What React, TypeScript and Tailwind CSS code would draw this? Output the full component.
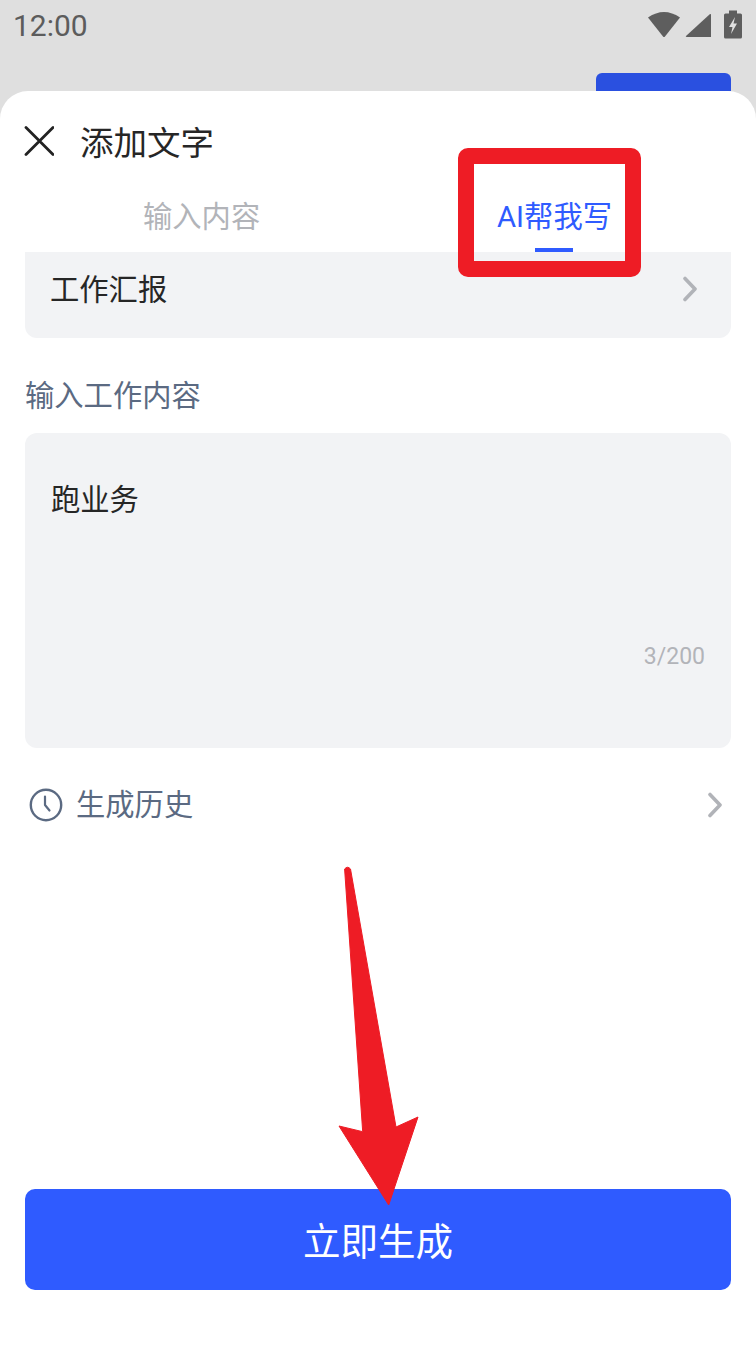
import React from "react";

const font = { fontFamily: '"Roboto","Noto Sans CJK SC",sans-serif' };

function Chevron({ className }: { className: string }) {
  return (
    <svg className={className} viewBox="0 0 16 26" fill="none">
      <path d="M3 2.5 L13 13 L3 23.5" stroke="#b1b3b8" strokeWidth="3.6" strokeLinecap="round" strokeLinejoin="round" />
    </svg>
  );
}

export default function App() {
  return (
    <div style={font} className="relative w-[756px] h-[1345px] overflow-hidden bg-[#dfdfdf]">
      <div className="h-[73px] flex items-start justify-between pl-[13px] pr-[14px]">
        <span className="text-[30px] leading-[34px] mt-[9px] text-[#5c5c5c]">12:00</span>
        <div className="flex items-start mt-[10px]">
          <svg width="34" height="28" viewBox="0 0 34 28" className="mr-[4px]">
            <path d="M1 7.5 Q17 -3.5 33 7.5 L18 26.5 Q17 27.5 16 26.5 Z" fill="#5e5e5e" />
          </svg>
          <svg width="27" height="28" viewBox="0 0 27 28" className="mr-[12px]">
            <path d="M1 26 L25 4 Q26 3.5 26 5 L26 27 L2 27 Q0 27 1 26 Z" fill="#5e5e5e" />
          </svg>
          <svg width="18" height="29" viewBox="0 0 18 29">
            <path d="M5 0.5 H13 V3.5 H16.5 Q18 3.5 18 5 V27 Q18 28.5 16.5 28.5 H1.5 Q0 28.5 0 27 V5 Q0 3.5 1.5 3.5 H5 Z" fill="#5e5e5e" />
            <path d="M11 7 L5 17 H8.5 L7 24 L13 13.5 H9.5 Z" fill="#e0e0e0" />
          </svg>
        </div>
      </div>
      <div className="h-[18px] flex justify-end pr-[25px]">
        <div className="w-[135px] h-[18px] bg-[#2a50e0] rounded-t-[6px]"></div>
      </div>
      <div className="h-[1254px] bg-white rounded-t-[28px] px-[25px] flex flex-col">
        <div className="h-[72px] pt-[25px] flex items-start">
          <svg width="30" height="30" viewBox="0 0 30 30" fill="none" className="mt-[10px] -ml-px">
            <path d="M2 1.5 L29 28.5 M29 1.5 L2 28.5" stroke="#222222" strokeWidth="2.8" strokeLinecap="round" />
          </svg>
          <span className="ml-[26px] text-[33.5px] leading-[56px] text-[#262626]">添加文字</span>
        </div>
        <div className="h-[89px] flex relative">
          <div className="absolute left-[118px] top-[33px] text-[29.3px] leading-[42px] text-[#b2b4b9]">输入内容</div>
          <div className="absolute left-[472px] top-[33px] text-[29.3px] leading-[42px] text-[#2f5bff] flex flex-col items-center">
            <span>AI帮我写</span>
            <span className="w-[38px] h-[4px] bg-[#2f5bff] mt-[10px]"></span>
          </div>
        </div>
        <div className="h-[86px] bg-[#f2f3f5] rounded-b-[12px] flex items-start justify-between pl-[26px] pr-[33px]">
          <span className="text-[29.3px] leading-[42px] mt-[17px] -ml-px text-[#262626]">工作汇报</span>
          <Chevron className="w-[16px] h-[26px] mt-[24px]" />
        </div>
        <div className="text-[29.3px] leading-[42px] mt-[37px] text-[#5b6a82]">输入工作内容</div>
        <div className="h-[315px] mt-[16px] bg-[#f2f3f5] rounded-[12px] pl-[26px] pr-[26px] pt-[46px] flex flex-col">
          <span className="text-[29.3px] leading-[42px] text-[#262626]">跑业务</span>
          <span className="text-[23px] leading-[28px] mt-[122px] text-right text-[#b2b4b9]">3/200</span>
        </div>
        <div className="mt-[36px] h-[42px] flex items-center justify-between pl-[4px] pr-[8px]">
          <div className="flex items-center">
            <svg width="34" height="34" viewBox="0 0 34 34" fill="none">
              <circle cx="17" cy="17" r="15.2" stroke="#5b6a82" strokeWidth="2.4" />
              <path d="M16 8.5 V17 L20.5 22.5" stroke="#5b6a82" strokeWidth="2.2" strokeLinecap="round" strokeLinejoin="round" />
            </svg>
            <span className="ml-[13px] text-[29.3px] leading-[42px] text-[#5b6a82]">生成历史</span>
          </div>
          <Chevron className="w-[16px] h-[26px]" />
        </div>
        <button className="mt-[363px] h-[101px] w-full bg-[#2f5bff] rounded-[10px] text-white text-[37.5px] leading-[106px] text-center">
          立即生成
        </button>
      </div>

      <div className="absolute left-[458px] top-[148px] w-[183px] h-[129px] border-[16px] border-[#ee1c25] rounded-[10px]"></div>
      <svg className="absolute left-[330px] top-[860px]" width="100" height="350" viewBox="0 0 100 350">
        <path
          d="M14.6 9 Q17.5 5.5 20.5 9 L66 267 L88 257 L58.7 345 L9 266 L32.7 271.7 Z"
          fill="#ee1c25"
          stroke="#ee1c25"
          strokeWidth="1"
          strokeLinejoin="round"
        />
      </svg>
    </div>
  );
}
